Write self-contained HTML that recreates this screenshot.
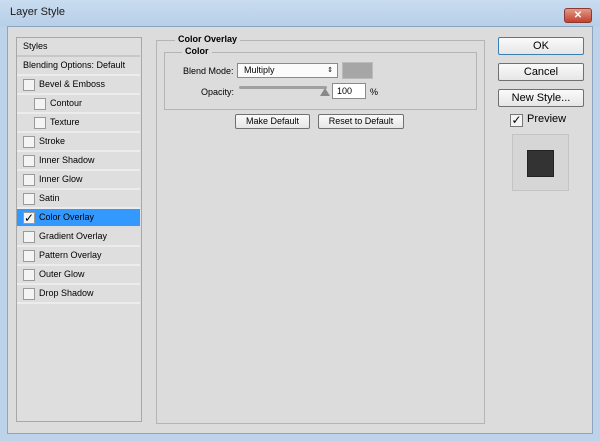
<!DOCTYPE html>
<html><head><style>
*{box-sizing:border-box;margin:0;padding:0}
body{width:600px;height:441px;background:#bcd3ea;font-family:"Liberation Sans",sans-serif;font-size:9px;color:#000;position:relative;overflow:hidden}
.abs{position:absolute}
.win{left:7px;top:26px;width:586px;height:408px;background:#dcdcdc;border:1px solid #8ea5bf}
.title{left:0;top:0;width:600px;height:26px;background:linear-gradient(#c9dcf0,#b7cfe8)}
.row{position:absolute;left:0;width:123px;height:19px;border-bottom:2px solid #ececec;line-height:17px}
.cb{position:absolute;top:3px;width:12px;height:12px;background:#f4f4f4;border:1px solid #9a9a9a}
.btn{position:absolute;background:linear-gradient(#fafafa,#e6e6e6);border:1px solid #707070;text-align:center;border-radius:2px}
</style></head><body>
<div class="abs title"></div>
<div class="abs" style="left:10px;top:6px;font-size:11px;color:#1a1a1a">Layer Style</div>
<div class="abs" style="left:564px;top:8px;width:28px;height:15px;background:linear-gradient(#e09a8a,#c4402c);border:1px solid #8a3a30;border-radius:3px;color:#fff;font-size:10px;font-weight:bold;text-align:center;line-height:13px">✕</div>
<div class="abs win"></div>
<div class="abs" style="left:16px;top:37px;width:126px;height:385px;border:1px solid #a8a8a8;background:#dedede">
 <div class="row" style="top:0;padding-left:6px;border-bottom-color:#c8c8c8">Styles</div>
 <div class="row" style="top:19px;padding-left:6px">Blending Options: Default</div>
 <div class="row" style="top:38px;padding-left:22px"><span class="cb" style="left:6px"></span>Bevel &amp; Emboss</div>
 <div class="row" style="top:57px;padding-left:33px"><span class="cb" style="left:17px"></span>Contour</div>
 <div class="row" style="top:76px;padding-left:33px"><span class="cb" style="left:17px"></span>Texture</div>
 <div class="row" style="top:95px;padding-left:22px"><span class="cb" style="left:6px"></span>Stroke</div>
 <div class="row" style="top:114px;padding-left:22px"><span class="cb" style="left:6px"></span>Inner Shadow</div>
 <div class="row" style="top:133px;padding-left:22px"><span class="cb" style="left:6px"></span>Inner Glow</div>
 <div class="row" style="top:152px;padding-left:22px"><span class="cb" style="left:6px"></span>Satin</div>
 <div class="row" style="top:171px;padding-left:22px;background:#3399ff;border-bottom-color:#dcdcdc"><span class="cb" style="left:6px;font-size:12px;line-height:10px;text-align:center">✓</span>Color Overlay</div>
 <div class="row" style="top:190px;padding-left:22px"><span class="cb" style="left:6px"></span>Gradient Overlay</div>
 <div class="row" style="top:209px;padding-left:22px"><span class="cb" style="left:6px"></span>Pattern Overlay</div>
 <div class="row" style="top:228px;padding-left:22px"><span class="cb" style="left:6px"></span>Outer Glow</div>
 <div class="row" style="top:247px;padding-left:22px"><span class="cb" style="left:6px"></span>Drop Shadow</div>
</div>
<div class="abs" style="left:156px;top:40px;width:329px;height:384px;border:1px solid #b4b4b4"></div>
<div class="abs" style="left:175px;top:34px;background:#dcdcdc;padding:0 3px;font-weight:bold">Color Overlay</div>
<div class="abs" style="left:164px;top:52px;width:313px;height:58px;border:1px solid #b4b4b4"></div>
<div class="abs" style="left:182px;top:46px;background:#dcdcdc;padding:0 3px;font-weight:bold">Color</div>
<div class="abs" style="left:183px;top:66px">Blend Mode:</div>
<div class="abs" style="left:237px;top:63px;width:101px;height:15px;background:#fbfbfb;border:1px solid #8a8a8a;padding-left:6px;line-height:13px">Multiply<span style="position:absolute;right:4px;font-size:7px">⇕</span></div>
<div class="abs" style="left:342px;top:62px;width:31px;height:17px;background:#a6a6a6;border:1px solid #bbb"></div>
<div class="abs" style="left:201px;top:87px">Opacity:</div>
<div class="abs" style="left:239px;top:86px;width:88px;height:3px;background:#a0a0a0;border-radius:2px"></div>
<div class="abs" style="left:320px;top:88px;width:0;height:0;border-left:5px solid transparent;border-right:5px solid transparent;border-bottom:8px solid #888"></div>
<div class="abs" style="left:332px;top:83px;width:34px;height:16px;background:#fff;border:1px solid #8a8a8a;padding-left:4px;line-height:14px">100</div>
<div class="abs" style="left:370px;top:87px">%</div>
<div class="btn" style="left:235px;top:114px;width:75px;height:15px;line-height:13px">Make Default</div>
<div class="btn" style="left:318px;top:114px;width:86px;height:15px;line-height:13px">Reset to Default</div>
<div class="btn" style="left:498px;top:37px;width:86px;height:18px;line-height:16px;font-size:11px;border-color:#3c7fb1">OK</div>
<div class="btn" style="left:498px;top:63px;width:86px;height:18px;line-height:16px;font-size:11px">Cancel</div>
<div class="btn" style="left:498px;top:89px;width:86px;height:18px;line-height:16px;font-size:11px">New Style...</div>
<div class="abs" style="left:510px;top:114px;width:13px;height:13px;background:#f4f4f4;border:1px solid #777;font-size:12px;line-height:11px;text-align:center">✓</div>
<div class="abs" style="left:527px;top:113px;font-size:11px">Preview</div>
<div class="abs" style="left:512px;top:134px;width:57px;height:57px;background:#d6d6d6;border:1px solid #c4c4c4"></div>
<div class="abs" style="left:527px;top:150px;width:27px;height:27px;background:#333;border:1px solid #222"></div>
</body></html>
